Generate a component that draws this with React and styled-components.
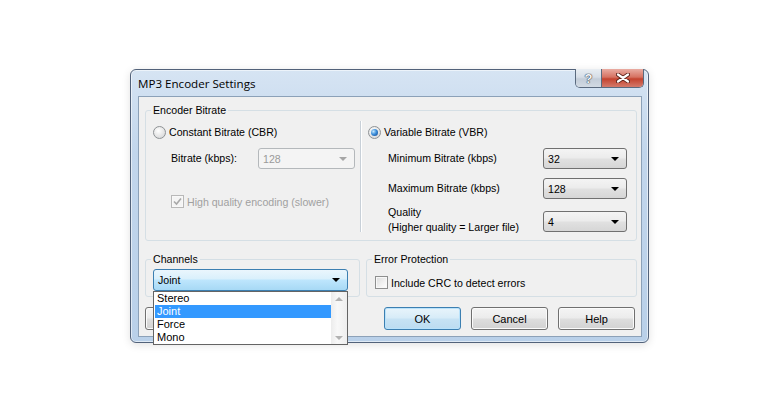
import styled, { createGlobalStyle, css } from "styled-components";

const GlobalStyle = createGlobalStyle`
  body {
    margin: 0;
    background: #ffffff;
    font-family: "Liberation Sans", Arial, sans-serif;
    font-size: 10.6px;
    color: #000000;
  }
`;

const Page = styled.div`
  padding: 69px 0 0 130px;
  width: 780px;
  height: 417px;
  box-sizing: border-box;
`;

const Window = styled.div`
  width: 519px;
  box-sizing: border-box;
  border: 1px solid #52627a;
  border-radius: 6px;
  padding: 0 6px 5px 7px;
  background: linear-gradient(to bottom, #d6e4f3 0%, #c2d6ec 30%, #b9d0e9 100%);
  box-shadow: inset 0 0 0 1px rgba(255, 255, 255, 0.55),
    0 2px 8px rgba(0, 0, 0, 0.12);
`;

const TitleBar = styled.div`
  height: 26px;
  display: flex;
  align-items: center;
`;

const TitleText = styled.span`
  font-family: "Open Sans", "Liberation Sans", sans-serif;
  font-size: 11.6px;
  color: #000000;
  padding-top: 1px;
`;

const TitleControls = styled.div`
  margin-left: auto;
  margin-right: -2px;
  margin-top: -1px;
  align-self: flex-start;
  display: flex;
  height: 18px;
  border: 1px solid #5a6a7e;
  border-top: none;
  border-radius: 0 0 5px 5px;
  overflow: hidden;
`;

const TitleButton = styled.div`
  width: ${(p) => p.$width}px;
  display: flex;
  align-items: center;
  justify-content: center;
  font-family: "Liberation Sans", sans-serif;
  font-weight: bold;
  font-size: 13px;
  color: #f4f6f8;
  text-shadow: 0 0 1px #3a4450, 0 0 1px #3a4450, 0 0 1px #3a4450;
  ${(p) =>
    p.$close
      ? css`
          background: linear-gradient(
            to bottom,
            #e9aca2 0%,
            #d67262 45%,
            #c4432f 55%,
            #d47a6b 100%
          );
        `
      : css`
          border-right: 1px solid #5a6a7e;
          background: linear-gradient(
            to bottom,
            #e9eef3 0%,
            #d6dee7 45%,
            #c3cdd8 55%,
            #d2dae3 100%
          );
        `}
`;

const Client = styled.div`
  border: 1px solid #8ca1b8;
  background: #f0f0f0;
  padding: 7px 4px 6px 6px;
`;

const GroupBox = styled.fieldset`
  margin: 0;
  padding: 0;
  min-width: 0;
  border: 1px solid #d5dfe5;
  border-radius: 3px;
  ${(p) => p.$width && `width: ${p.$width}px; flex: none; box-sizing: border-box;`}
  ${(p) => p.$grow && `flex: 1;`}
`;

const Legend = styled.legend`
  margin-left: 5px;
  padding: 0 2px;
  line-height: 13px;
`;

const EncoderBody = styled.div`
  display: flex;
  padding-bottom: 5px;
`;

const LeftCol = styled.div`
  width: 214px;
  flex: none;
  box-sizing: border-box;
  padding: 8px 0 0 7px;
`;

const Separator = styled.div`
  width: 1px;
  flex: none;
  background: #c8d0d8;
  border-right: 1px solid #ffffff;
  margin: 4px 0 3px;
`;

const RightCol = styled.div`
  flex: 1;
  padding: 8px 9px 0 6px;
`;

const RadioRow = styled.label`
  display: flex;
  align-items: center;
  gap: 3px;
  height: 14px;
`;

const Radio = styled.span`
  position: relative;
  width: 11px;
  height: 11px;
  flex: none;
  border-radius: 50%;
  border: 1px solid #8e9295;
  background: radial-gradient(
    circle at 40% 35%,
    #ffffff 0%,
    #eaeaea 45%,
    #cfd1d3 100%
  );
  ${(p) =>
    p.$checked &&
    css`
      &::after {
        content: "";
        position: absolute;
        left: 2px;
        top: 2px;
        width: 7px;
        height: 7px;
        border-radius: 50%;
        background: radial-gradient(
          circle at 35% 35%,
          #c6e8fc 0%,
          #3d8fdb 45%,
          #0f3f86 100%
        );
      }
    `}
`;

const FieldRow = styled.div`
  display: flex;
  align-items: ${(p) => (p.$top ? "flex-start" : "center")};
  margin-top: ${(p) => p.$mt}px;
  padding-left: ${(p) => p.$indent}px;
`;

const FieldLabel = styled.span`
  ${(p) => (p.$width ? `width: ${p.$width}px; flex: none;` : `flex: 1;`)}
  line-height: ${(p) => (p.$tall ? "15px" : "13px")};
`;

const Combo = styled.div`
  position: relative;
  width: ${(p) => p.$width}px;
  height: ${(p) => p.$height || 21}px;
  margin-top: ${(p) => p.$mt || 0}px;
  flex: none;
  box-sizing: border-box;
  border-radius: 3px;
  display: flex;
  align-items: center;
  padding-left: 4px;
  ${(p) =>
    p.$disabled
      ? css`
          border: 1px solid #b4b8bb;
          background: #f4f4f4;
          color: #9a9a9a;
        `
      : p.$active
      ? css`
          border: 1px solid #3c7fb1;
          background: linear-gradient(
            to bottom,
            #eaf6fd 0%,
            #d9f0fc 45%,
            #bee6fd 50%,
            #a7d9f5 100%
          );
        `
      : css`
          border: 1px solid #707070;
          background: linear-gradient(
            to bottom,
            #f4f4f4 0%,
            #ececec 45%,
            #e0e0e0 55%,
            #d6d6d6 100%
          );
        `}
`;

const Arrow = styled.span`
  margin-left: auto;
  margin-right: 7px;
  width: 0;
  height: 0;
  border-left: 4px solid transparent;
  border-right: 4px solid transparent;
  border-top: 4px solid ${(p) => (p.$disabled ? "#a6a6a6" : "#000000")};
`;

const CheckRow = styled.label`
  display: flex;
  align-items: center;
  gap: 3px;
  height: 13px;
  margin-top: ${(p) => p.$mt || 0}px;
  padding-left: ${(p) => p.$indent}px;
  color: ${(p) => (p.$disabled ? "#a0a0a0" : "#000000")};
`;

const Box = styled.span`
  width: 11px;
  height: 11px;
  flex: none;
  display: flex;
  align-items: center;
  justify-content: center;
  border: 1px solid ${(p) => (p.$disabled ? "#b8b8b8" : "#8e8f8f")};
  background: ${(p) =>
    p.$disabled
      ? "#f4f4f4"
      : "linear-gradient(135deg, #dcdcdc 0%, #f2f2f2 60%, #ffffff 100%)"};
  box-shadow: inset 0 0 0 1px #f8f8f8;
`;

const BottomRow = styled.div`
  display: flex;
  gap: 6px;
  margin-top: 12px;
`;

const ChannelsBody = styled.div`
  padding: 3px 0 5px 7px;
`;

const ErrorBody = styled.div`
  padding-top: 10px;
`;

const ComboWrap = styled.div`
  position: relative;
  width: 195px;
`;

const DropList = styled.div`
  position: absolute;
  top: 100%;
  left: 0;
  width: 195px;
  box-sizing: border-box;
  border: 1px solid #646464;
  background: #ffffff;
  display: flex;
  z-index: 5;
`;

const Items = styled.div`
  flex: 1;
  padding-left: 1px;
`;

const Item = styled.div`
  height: 13px;
  line-height: 13px;
  padding-left: 2px;
  font-size: 11px;
  background: ${(p) => (p.$selected ? "#3399ff" : "transparent")};
  color: ${(p) => (p.$selected ? "#ffffff" : "#000000")};
`;

const ScrollBar = styled.div`
  width: 16px;
  flex: none;
  display: flex;
  flex-direction: column;
  justify-content: space-between;
  align-items: center;
  padding: 5px 0 4px;
  background: linear-gradient(to right, #ececec, #f8f8f8 40%, #eeeeee);
`;

const ScrollArrow = styled.span`
  width: 0;
  height: 0;
  border-left: 4px solid transparent;
  border-right: 4px solid transparent;
  ${(p) =>
    p.$up
      ? `border-bottom: 4px solid #b2b2b2;`
      : `border-top: 4px solid #b2b2b2;`}
`;

const ButtonRow = styled.div`
  display: flex;
  gap: 10px;
  margin-top: 10px;
  padding-right: 2px;
`;

const Button = styled.button`
  width: ${(p) => p.$width || 77}px;
  height: 23px;
  padding: 0;
  font-family: "Liberation Sans", Arial, sans-serif;
  font-size: 11px;
  color: #000000;
  border-radius: 3px;
  ${(p) => p.$push && `margin-right: auto;`}
  ${(p) =>
    p.$default
      ? css`
          border: 1px solid #3c7fb1;
          background: linear-gradient(
            to bottom,
            #e8f4fb 0%,
            #d8ecf8 45%,
            #c6e2f4 55%,
            #bcdcf1 100%
          );
          box-shadow: inset 0 0 0 1px #b9e2fb;
        `
      : css`
          border: 1px solid #707070;
          background: linear-gradient(
            to bottom,
            #f4f4f4 0%,
            #ececec 45%,
            #dddddd 55%,
            #d2d2d2 100%
          );
          box-shadow: inset 0 0 0 1px #fbfbfb;
        `}
`;

const channels = ["Stereo", "Joint", "Force", "Mono"];

function CloseGlyph() {
  return (
    <svg width="14" height="10" viewBox="0 0 14 10">
      <path d="M2 1.5 L12 8.5 M12 1.5 L2 8.5" stroke="#5a2119" strokeWidth="4" strokeLinecap="round" />
      <path d="M2 1.5 L12 8.5 M12 1.5 L2 8.5" stroke="#ffffff" strokeWidth="2.2" strokeLinecap="round" />
    </svg>
  );
}

function CheckMark() {
  return (
    <svg width="9" height="9" viewBox="0 0 9 9">
      <path d="M1 4.5 L3.5 7 L8 1.5" fill="none" stroke="#a8a8a8" strokeWidth="1.6" />
    </svg>
  );
}

export default function App() {
  return (
    <Page>
      <GlobalStyle />
      <Window>
        <TitleBar>
          <TitleText>MP3 Encoder Settings</TitleText>
          <TitleControls>
            <TitleButton $width={25}>?</TitleButton>
            <TitleButton $width={41} $close>
              <CloseGlyph />
            </TitleButton>
          </TitleControls>
        </TitleBar>
        <Client>
          <GroupBox>
            <Legend>Encoder Bitrate</Legend>
            <EncoderBody>
              <LeftCol>
                <RadioRow>
                  <Radio />
                  Constant Bitrate (CBR)
                </RadioRow>
                <FieldRow $mt={9} $indent={18}>
                  <FieldLabel $width={87}>Bitrate (kbps):</FieldLabel>
                  <Combo $width={97} $disabled>
                    128
                    <Arrow $disabled />
                  </Combo>
                </FieldRow>
                <CheckRow $mt={26} $indent={18} $disabled>
                  <Box $disabled>
                    <CheckMark />
                  </Box>
                  High quality encoding (slower)
                </CheckRow>
              </LeftCol>
              <Separator />
              <RightCol>
                <RadioRow>
                  <Radio $checked />
                  Variable Bitrate (VBR)
                </RadioRow>
                <FieldRow $mt={9} $indent={20}>
                  <FieldLabel>Minimum Bitrate (kbps)</FieldLabel>
                  <Combo $width={84}>
                    32
                    <Arrow />
                  </Combo>
                </FieldRow>
                <FieldRow $mt={9} $indent={20}>
                  <FieldLabel>Maximum Bitrate (kbps)</FieldLabel>
                  <Combo $width={84}>
                    128
                    <Arrow />
                  </Combo>
                </FieldRow>
                <FieldRow $mt={6} $indent={20} $top>
                  <FieldLabel $tall>
                    Quality
                    <br />
                    (Higher quality = Larger file)
                  </FieldLabel>
                  <Combo $width={84} $mt={6}>
                    4
                    <Arrow />
                  </Combo>
                </FieldRow>
              </RightCol>
            </EncoderBody>
          </GroupBox>

          <BottomRow>
            <GroupBox $width={215}>
              <Legend>Channels</Legend>
              <ChannelsBody>
                <ComboWrap>
                  <Combo $width={195} $height={22} $active>
                    Joint
                    <Arrow />
                  </Combo>
                  <DropList>
                    <Items>
                      {channels.map((c) => (
                        <Item key={c} $selected={c === "Joint"}>
                          {c}
                        </Item>
                      ))}
                    </Items>
                    <ScrollBar>
                      <ScrollArrow $up />
                      <ScrollArrow />
                    </ScrollBar>
                  </DropList>
                </ComboWrap>
              </ChannelsBody>
            </GroupBox>
            <GroupBox $grow>
              <Legend>Error Protection</Legend>
              <ErrorBody>
                <CheckRow $indent={8}>
                  <Box />
                  Include CRC to detect errors
                </CheckRow>
              </ErrorBody>
            </GroupBox>
          </BottomRow>

          <ButtonRow>
            <Button $width={80} $push aria-label="Defaults" />
            <Button $default>OK</Button>
            <Button>Cancel</Button>
            <Button>Help</Button>
          </ButtonRow>
        </Client>
      </Window>
    </Page>
  );
}
